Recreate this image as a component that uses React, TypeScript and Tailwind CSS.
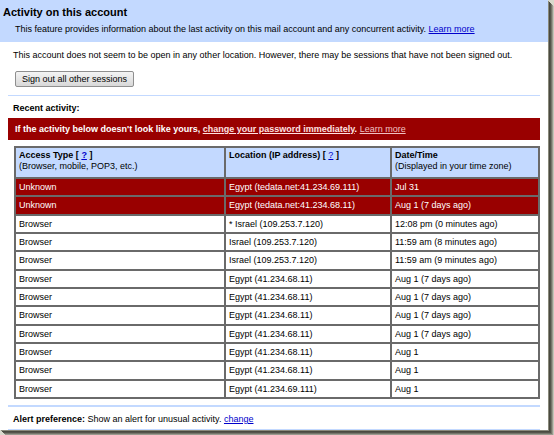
import React from 'react';

type Row = { type: string; loc: string; date: string; alert?: boolean };

const rows: Row[] = [
  { type: 'Unknown', loc: 'Egypt (tedata.net:41.234.69.111)', date: 'Jul 31', alert: true },
  { type: 'Unknown', loc: 'Egypt (tedata.net:41.234.68.11)', date: 'Aug 1 (7 days ago)', alert: true },
  { type: 'Browser', loc: '* Israel (109.253.7.120)', date: '12:08 pm (0 minutes ago)' },
  { type: 'Browser', loc: 'Israel (109.253.7.120)', date: '11:59 am (8 minutes ago)' },
  { type: 'Browser', loc: 'Israel (109.253.7.120)', date: '11:59 am (9 minutes ago)' },
  { type: 'Browser', loc: 'Egypt (41.234.68.11)', date: 'Aug 1 (7 days ago)' },
  { type: 'Browser', loc: 'Egypt (41.234.68.11)', date: 'Aug 1 (7 days ago)' },
  { type: 'Browser', loc: 'Egypt (41.234.68.11)', date: 'Aug 1 (7 days ago)' },
  { type: 'Browser', loc: 'Egypt (41.234.68.11)', date: 'Aug 1 (7 days ago)' },
  { type: 'Browser', loc: 'Egypt (41.234.68.11)', date: 'Aug 1' },
  { type: 'Browser', loc: 'Egypt (41.234.68.11)', date: 'Aug 1' },
  { type: 'Browser', loc: 'Egypt (41.234.69.111)', date: 'Aug 1' },
];

// Old Gmail "Activity on this account" popup, captured with a drop shadow
export default function App() {
  return (
    <div className="w-[554px] h-[435px] bg-[#d9d9cc] font-['Liberation_Sans',Arial,sans-serif] text-[9px] text-black">
      <div className="w-[548px] h-[430px] bg-white overflow-hidden shadow-[1px_1px_0_#8a8a7c,2px_2px_0_#4a4a40,3px_3px_0_#55554b,4px_4px_0_#75756a,5px_5px_0_#9a9a8e,6px_6px_0_#c4c4b8]">
        <div className="bg-[#c3d9ff] h-[42px] pt-[5px]">
          <div className="pl-[3px] text-[11px] font-bold leading-[14px]">Activity on this account</div>
          <div className="pl-[15px] mt-[4px] leading-[12px]">
            This feature provides information about the last activity on this mail account and any concurrent activity.{' '}
            <a className="text-[#0000cc] underline">Learn more</a>
          </div>
        </div>

        <div className="pl-[13px] pt-[7px] leading-[12px]">
          This account does not seem to be open in any other location. However, there may be sessions that have not been signed out.
        </div>
        <div className="pl-[15px] pt-[10px]">
          <button className="h-[16px] w-[119px] border border-[#8f8f8f] rounded-[2px] bg-gradient-to-b from-[#f4f4f4] to-[#d8d8d8] text-[9px] leading-[14px]">
            Sign out all other sessions
          </button>
        </div>

        <div className="mx-[8px] mt-[8px] h-[1px] bg-[#c3d9ff]" />

        <div className="pl-[13px] pt-[6px] font-bold leading-[12px]">Recent activity:</div>

        <div className="mx-[8px] mt-[4px] h-[22px] bg-[#990000] text-white font-bold leading-[22px] pl-[7px]">
          If the activity below doesn&apos;t look like yours,{' '}
          <a className="underline text-[#ffe0e0]">change your password immediately</a>.{' '}
          <a className="underline font-normal text-[#f0c0c0]">Learn more</a>
        </div>

        <table className="ml-[14px] mt-[6px] w-[524px] border-collapse border-2 border-[#5c5c5c] table-fixed">
          <colgroup>
            <col className="w-[210px]" />
            <col className="w-[166px]" />
            <col className="w-[148px]" />
          </colgroup>
          <thead>
            <tr className="bg-[#c3d9ff] h-[31px] align-top">
              <th className="border-2 border-[#6a6a6a] text-left font-normal px-[3px] pt-[2px] leading-[11px]">
                <div className="font-bold">
                  Access Type [ <a className="text-[#0000cc] underline">?</a> ]
                </div>
                <div>(Browser, mobile, POP3, etc.)</div>
              </th>
              <th className="border-2 border-[#6a6a6a] text-left px-[3px] pt-[2px] leading-[11px]">
                Location (IP address) [ <a className="text-[#0000cc] underline font-normal">?</a> ]
              </th>
              <th className="border-2 border-[#6a6a6a] text-left font-normal px-[3px] pt-[2px] leading-[11px]">
                <div className="font-bold">Date/Time</div>
                <div>(Displayed in your time zone)</div>
              </th>
            </tr>
          </thead>
          <tbody>
            {rows.map((r, i) => (
              <tr key={i} className={r.alert ? 'bg-[#990000] text-white h-[18.33px]' : 'h-[18.33px]'}>
                <td className="border-2 border-[#6a6a6a] px-[3px] leading-[12px]">{r.type}</td>
                <td className="border-2 border-[#6a6a6a] px-[3px] leading-[12px]">{r.loc}</td>
                <td className="border-2 border-[#6a6a6a] px-[3px] leading-[12px]">{r.date}</td>
              </tr>
            ))}
          </tbody>
        </table>

        <div className="mx-[8px] mt-[6px] h-[2px] bg-[#c3d9ff]" />
        <div className="pl-[13px] pt-[6px] leading-[12px]">
          <span className="font-bold">Alert preference:</span> Show an alert for unusual activity.{' '}
          <a className="text-[#0000cc] underline">change</a>
        </div>
        <div className="mx-[8px] mt-[4px] h-[2px] bg-[#c3d9ff]" />
      </div>
    </div>
  );
}
